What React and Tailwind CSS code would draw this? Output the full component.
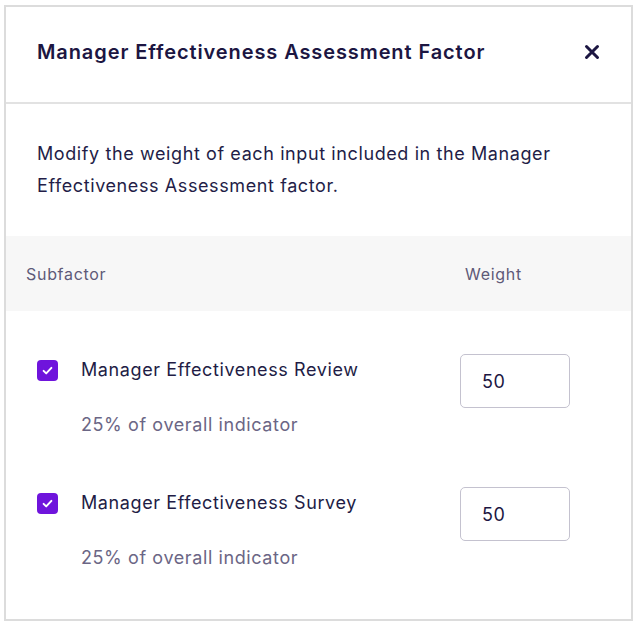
import React, { useState } from 'react';

function CheckIcon() {
  return (
    <svg viewBox="0 0 20 20" className="w-[13px] h-[13px]" fill="none">
      <path d="M4 10.5l4 4 8-8.5" stroke="white" strokeWidth="3" strokeLinecap="round" strokeLinejoin="round" />
    </svg>
  );
}

function SubfactorRow({ label, note, value, checked, onToggle, onChange }) {
  return (
    <div className="flex items-start">
      <div className="flex-1 flex items-start pl-[31px]">
        <button
          onClick={onToggle}
          className={`mt-[6px] w-[21px] h-[21px] rounded-[4px] flex items-center justify-center shrink-0 ${
            checked ? 'bg-[#6f14dc]' : 'bg-white border-2 border-[#c9c7d3]'
          }`}
        >
          {checked && <CheckIcon />}
        </button>
        <div className="ml-[23px]">
          <div className="text-[18px] leading-[32px] tracking-[0.6px] text-[#221c45]">{label}</div>
          <div className="mt-[23px] text-[18px] leading-[32px] tracking-[0.6px] text-[#6b6685]">{note}</div>
        </div>
      </div>
      <div className="w-[171px] shrink-0">
        <input
          value={value}
          onChange={(e) => onChange(e.target.value)}
          className="w-[110px] h-[54px] rounded-[5px] border border-[#c4c2cf] pl-[21px] text-[18px] tracking-[0.6px] text-[#1c1642] outline-none"
        />
      </div>
    </div>
  );
}

export default function App() {
  const [rows, setRows] = useState([
    { label: 'Manager Effectiveness Review', value: '50', checked: true },
    { label: 'Manager Effectiveness Survey', value: '50', checked: true },
  ]);

  const update = (i, patch) =>
    setRows((r) => r.map((row, idx) => (idx === i ? { ...row, ...patch } : row)));

  return (
    <div className="bg-white min-h-screen pt-[5px] px-[4px] pb-[5px]" style={{ fontFamily: 'Inter, "Noto Sans", sans-serif' }}>
      <div className="border-2 border-[#dcdcdc] h-[616px] flex flex-col bg-white">
        {/* Header */}
        <div className="h-[97px] shrink-0 flex items-center justify-between pl-[31px] pr-[31px] pb-[6px] border-b-2 border-[#e2e2e2]">
          <h2 className="text-[20px] font-semibold text-[#1c1642] tracking-[0.9px]">
            Manager Effectiveness Assessment Factor
          </h2>
          <button className="text-[#1c1642]">
            <svg viewBox="0 0 16 16" className="w-[16px] h-[16px]" fill="none">
              <path d="M2.5 2.5l11 11M13.5 2.5l-11 11" stroke="currentColor" strokeWidth="3" strokeLinecap="round" />
            </svg>
          </button>
        </div>

        {/* Description */}
        <p className="pl-[31px] pr-[40px] pt-[34px] pb-[34px] text-[18px] leading-[32px] tracking-[0.6px] text-[#231d47]">
          Modify the weight of each input included in the Manager Effectiveness Assessment factor.
        </p>

        {/* Table header */}
        <div className="h-[75px] shrink-0 bg-[#f7f7f7] flex items-center">
          <div className="flex-1 pl-[20px] text-[16px] tracking-[0.7px] text-[#5e5a78]">Subfactor</div>
          <div className="w-[171px] pl-[5px] text-[16px] tracking-[0.7px] text-[#5e5a78]">Weight</div>
        </div>

        {/* Rows */}
        <div className="pt-[43px] flex flex-col gap-[46px]">
          {rows.map((row, i) => (
            <SubfactorRow
              key={i}
              label={row.label}
              note="25% of overall indicator"
              value={row.value}
              checked={row.checked}
              onToggle={() => update(i, { checked: !row.checked })}
              onChange={(v) => update(i, { value: v })}
            />
          ))}
        </div>
      </div>
    </div>
  );
}
